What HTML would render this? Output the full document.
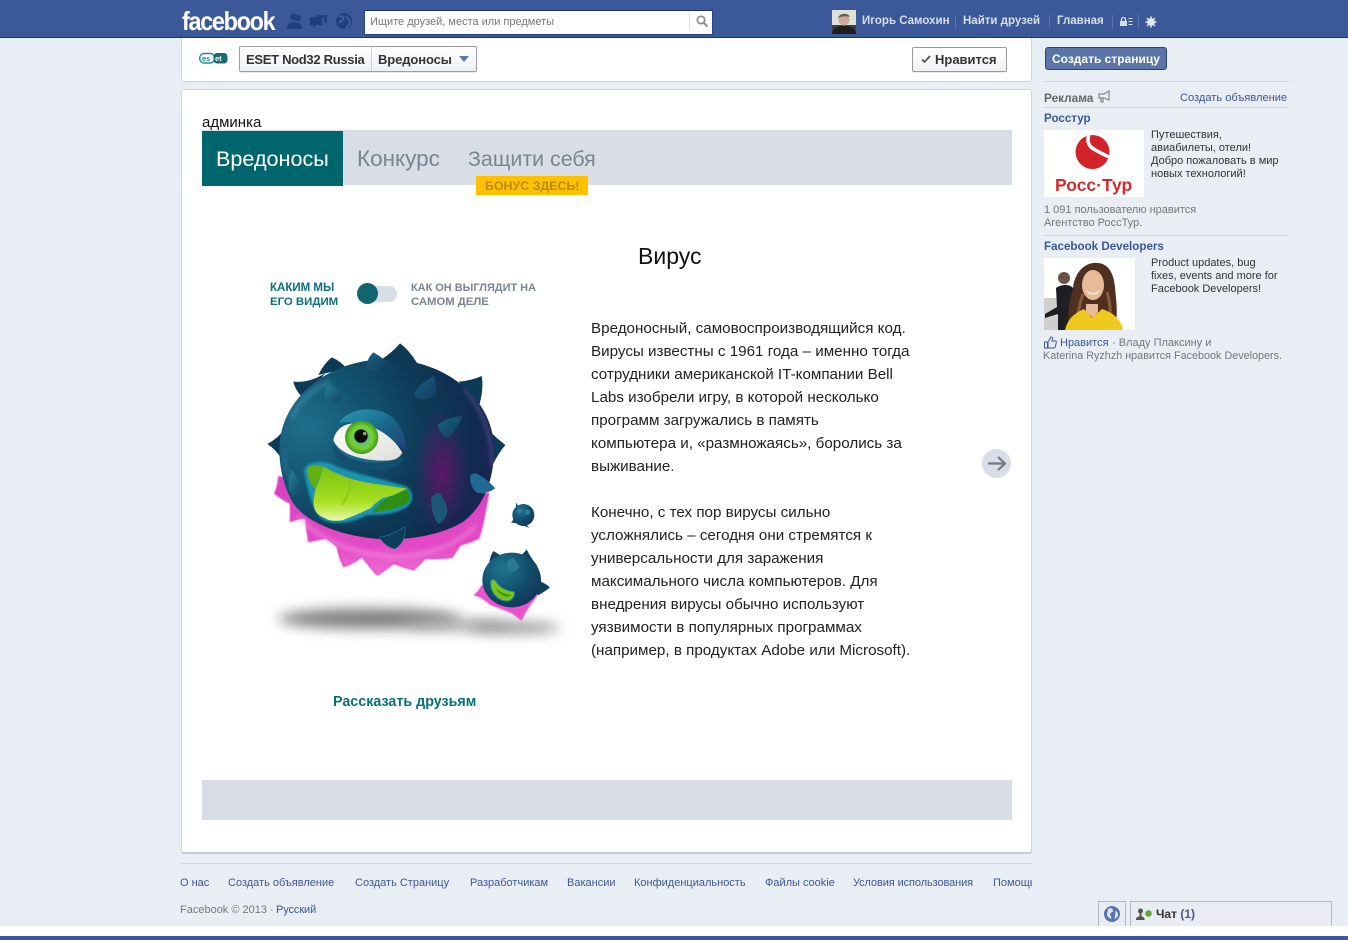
<!DOCTYPE html>
<html lang="ru"><head><meta charset="utf-8"><title>ESET Nod32 Russia</title>
<style>
html,body{margin:0;padding:0}
body{width:1348px;height:940px;position:relative;overflow:hidden;background:#e9edf4;font-family:"Liberation Sans",sans-serif;color:#111}
.b{position:absolute;box-sizing:border-box}
.t{position:absolute;white-space:nowrap;line-height:16px}
.n{color:#d8dfea;font-weight:bold;font-size:11.5px;top:13px}
.s{width:1px;height:13px;background:#5a75ab;top:15px;position:absolute}
.l{font-size:15.2px;left:591px;color:#222;line-height:20px}
.f{font-size:11px;color:#3b5998;top:875px}
.a{font-size:11px;color:#333}
.g{font-size:11px;color:#777}
.h{font-size:11.6px;color:#3b5998;font-weight:bold}
</style></head><body>
<!-- header -->
<div class="b" style="left:0;top:0;width:1348px;height:38px;background:#3b5998;border-bottom:1px solid #133783"></div>
<div class="t" style="left:182px;top:7px;font-size:26px;line-height:28px;font-weight:bold;color:#fff;letter-spacing:-1.45px;transform:scaleX(.9);transform-origin:0 0">facebook</div>
<svg class="b" style="left:284px;top:12px" width="70" height="20" viewBox="0 0 70 20">
<g fill="#223f7d"><circle cx="10" cy="5" r="3.6"/><circle cx="14" cy="6" r="3"/><path d="M3 17c0-5 2-7 7-7s8 2 8 7z"/><path d="M26 5h12v8h-6l-3 3v-3h-3z"/><path d="M33 3h10v8h-3V6h-7z"/><circle cx="60" cy="9" r="8"/></g>
<path d="M55 5c3-2 5 0 4 2s-3 2-3 4M62 4c1 3 4 3 4 6s-3 4-4 6" stroke="#3f5e9b" stroke-width="2" fill="none"/>
</svg>
<div class="b" style="left:364px;top:10px;width:349px;height:25px;background:#fff;border:1px solid #2a4480;border-top-color:#1d3669"></div>
<div class="t" style="left:370px;top:14px;font-size:11px;color:#777">Ищите друзей, места или предметы</div>
<div class="b" style="left:689px;top:13px;width:1px;height:17px;background:#ddd"></div>
<svg class="b" style="left:695px;top:14px" width="14" height="14" viewBox="0 0 14 14"><circle cx="6" cy="6" r="3.7" fill="none" stroke="#8b8b8b" stroke-width="1.7"/><path d="M9 9l3.500 3.500" stroke="#8b8b8b" stroke-width="2"/></svg>
<svg class="b" style="left:832px;top:10px" width="24" height="24" viewBox="0 0 24 24"><rect width="24" height="24" fill="#dfe0da"/><rect y="15" width="24" height="9" fill="#3c3d3c"/><circle cx="12" cy="10" r="5.500" fill="#c9ab98"/><path d="M6 8c1-5 10-6 12-1-3-1-8-1-12 1z" fill="#6d6050"/><path d="M0 24c1-6 5-8 12-8s11 2 12 8z" fill="#1d1d1d"/></svg>
<div class="t n" style="left:862px">Игорь Самохин</div><div class="s" style="left:955px"></div>
<div class="t n" style="left:963px">Найти друзей</div><div class="s" style="left:1049px"></div>
<div class="t n" style="left:1057px">Главная</div><div class="s" style="left:1112px"></div>
<svg class="b" style="left:1119px;top:16px" width="14" height="11" viewBox="0 0 14 11"><path d="M1 5h7v5H1z" fill="#d8dfea"/><path d="M2.500 5V3.500a2 2 0 0 1 4 0V5" fill="none" stroke="#d8dfea" stroke-width="1.300"/><path d="M9.500 2.500h4M9.500 5.500h4M9.500 8.500h4" stroke="#d8dfea" stroke-width="1"/></svg>
<div class="s" style="left:1138px"></div>
<svg class="b" style="left:1145px;top:16px" width="12" height="12" viewBox="0 0 12 12"><circle cx="6" cy="6" r="2.800" fill="none" stroke="#e2e7f1" stroke-width="2"/><path d="M6 .5v11M.5 6h11M2 2l8 8M10 2l-8 8" stroke="#e2e7f1" stroke-width="1.500"/></svg>

<!-- top card -->
<div class="b" style="left:181px;top:38px;width:851px;height:44px;background:#fff;border:1px solid #cdd4e2;border-top:0;border-radius:0 0 3px 3px"></div>
<svg class="b" style="left:199px;top:52px" width="29" height="13" viewBox="0 0 29 13"><rect x=".7" y="1.500" width="15" height="9.500" rx="4.500" fill="none" stroke="#1c8d94" stroke-width="1.400"/><rect x="14.500" y="1" width="14" height="10.500" rx="3.500" fill="#176b75"/><text x="3" y="9" font-family="Liberation Sans" font-size="7.500" font-weight="bold" fill="#1c8d94">es</text><text x="16" y="9" font-family="Liberation Sans" font-size="7.500" font-weight="bold" fill="#fff">et</text></svg>
<div class="b" style="left:239px;top:46px;width:238px;height:26px;border:1px solid #9a9fa8;border-radius:2px;background:linear-gradient(#fff,#eef0f4);box-shadow:0 1px 0 rgba(0,0,0,.08)"></div>
<div class="b" style="left:371px;top:47px;width:1px;height:24px;background:#cfd3da"></div>
<div class="t" style="left:246px;top:52px;font-size:13px;font-weight:bold;color:#333;letter-spacing:-.3px">ESET Nod32 Russia</div>
<div class="t" style="left:378px;top:52px;font-size:13px;font-weight:bold;color:#333;letter-spacing:-.1px">Вредоносы</div>
<svg class="b" style="left:459px;top:56px" width="11" height="7"><path d="M0 0h10L5 6z" fill="#6079ac"/></svg>
<div class="b" style="left:912px;top:47px;width:95px;height:25px;border:1px solid #999;border-radius:2px;background:linear-gradient(#fff,#f0f1f4);box-shadow:0 1px 0 rgba(0,0,0,.08)"></div>
<svg class="b" style="left:921px;top:55px" width="10" height="9"><path d="M1 4.500l2.500 2.500L9 1" stroke="#555" stroke-width="1.800" fill="none"/></svg>
<div class="t" style="left:935px;top:52px;font-size:13px;font-weight:bold;color:#333">Нравится</div>

<!-- right column -->
<div class="b" style="left:1045px;top:47px;width:122px;height:23px;background:#5b74a8;border:1px solid #29447e;border-radius:3px"></div>
<div class="t" style="left:1052px;top:51px;font-size:12px;font-weight:bold;color:#fff">Создать страницу</div>
<div class="b" style="left:1044px;top:81px;width:245px;height:1px;background:#cfd4df"></div>
<div class="t" style="left:1044px;top:90px;font-size:11.800px;font-weight:bold;color:#666">Реклама</div>
<svg class="b" style="left:1098px;top:90px" width="14" height="13" viewBox="0 0 14 13"><path d="M1 4h5l5-3v9L6 8H1zM3 8v4h2V8" fill="none" stroke="#888" stroke-width="1.200"/></svg>
<div class="t" style="left:1180px;top:90px;font-size:11.100px;color:#3b5998">Создать объявление</div>
<div class="b" style="left:1044px;top:107px;width:245px;height:1px;background:#cfd4df"></div>
<div class="t h" style="left:1044px;top:111px">Росстур</div>
<div class="b" style="left:1044px;top:130px;width:100px;height:67px;background:#fff"></div>
<svg class="b" style="left:1074px;top:134px" width="40" height="38" viewBox="0 0 40 38"><circle cx="18.500" cy="18" r="17" fill="#d2232a"/><path d="M15 0c-2 6-1 10 2 13 3 3 10 6 20 11" fill="none" stroke="#fff" stroke-width="3.500"/></svg>
<div class="t" style="left:1055px;top:176px;font-size:17.500px;line-height:18px;font-weight:bold;color:#d8282e">Росс·Тур</div>
<div class="t a" style="left:1151px;top:127px">Путешествия,</div>
<div class="t a" style="left:1151px;top:140px">авиабилеты, отели!</div>
<div class="t a" style="left:1151px;top:153px">Добро пожаловать в мир</div>
<div class="t a" style="left:1151px;top:166px">новых технологий!</div>
<div class="t g" style="left:1044px;top:202px">1 091 пользователю нравится</div>
<div class="t g" style="left:1044px;top:215px">Агентство РоссТур.</div>
<div class="b" style="left:1044px;top:235px;width:245px;height:1px;background:#cfd4df"></div>
<div class="t h" style="left:1044px;top:239px">Facebook Developers</div>
<svg class="b" style="left:1044px;top:258px" width="91" height="72" viewBox="0 0 91 72"><rect width="91" height="72" fill="#fff"/><rect y="40" width="14" height="32" fill="#cfcfcf"/><circle cx="20" cy="20" r="6" fill="#6b5244"/><path d="M12 30c5-4 14-4 17 0l3 30-8 12H14v-16L1 60v-4l12-7z" fill="#1f1f23"/><path d="M26 72c-4-16 0-30 3-42 2-18 14-26 24-25 12 0 17 12 18 24 1 14 4 28 -1 43z" fill="#4f3020"/><path d="M33 70c0-14 3-26 6-34M66 68c1-12 0-24-3-34" stroke="#8a5a35" stroke-width="3" fill="none"/><ellipse cx="49" cy="27" rx="11" ry="15" fill="#e8bb98"/><path d="M42 32c4 4 10 4 14 0-2 6-12 6-14 0z" fill="#fff"/><path d="M21 72c3-12 10-17 19-21l8 9 10-9c9 3 19 9 21 21z" fill="#f0c91f"/><path d="M42 46h12v8l-5 6-7-6z" fill="#e8bb98"/></svg>
<div class="t a" style="left:1151px;top:255px">Product updates, bug</div>
<div class="t a" style="left:1151px;top:268px">fixes, events and more for</div>
<div class="t a" style="left:1151px;top:281px">Facebook Developers!</div>
<svg class="b" style="left:1044px;top:336px" width="13" height="13" viewBox="0 0 13 13"><path d="M.5 6h3v6h-3zM4 6l3-5c1.500 0 2 1 1.500 2.500L8 5h3.500c1 0 1 1 .7 2l-1 4c-.2.700-.7 1-1.500 1H4z" fill="#e6ebf5" stroke="#3b5998"/></svg>
<div class="t" style="left:1060px;top:335px;font-size:11px;color:#3b5998">Нравится</div>
<div class="t g" style="left:1112px;top:335px">· Владу Плаксину и</div>
<div class="t g" style="left:1043px;top:348px;font-size:10.800px">Katerina Ryzhzh нравится Facebook Developers.</div>

<!-- main card -->
<div class="b" style="left:181px;top:89px;width:851px;height:765px;background:#fff;border:1px solid #cdd4e2;border-bottom:2px solid #c3cad8;border-radius:3px"></div>
<div class="t" style="left:202px;top:115px;font-size:15px;color:#111">админка</div>
<div class="b" style="left:202px;top:130px;width:810px;height:55px;background:#d8dde6"></div>
<div class="b" style="left:202px;top:131px;width:141px;height:55px;background:#00666e"></div>
<div class="t" style="left:216px;top:146px;font-size:21.600px;line-height:26px;color:#fff">Вредоносы</div>
<div class="t" style="left:357px;top:146px;font-size:22.500px;line-height:26px;color:#7a8592">Конкурс</div>
<div class="t" style="left:468px;top:146px;font-size:21.400px;line-height:26px;color:#7a8592">Защити себя</div>
<div class="b" style="left:476px;top:176px;width:112px;height:19px;background:#ffc000"></div>
<div class="t" style="left:485px;top:178px;font-size:12.400px;font-weight:bold;color:#bb8a12">БОНУС ЗДЕСЬ!</div>
<div class="t" style="left:638px;top:242px;font-size:23px;line-height:28px;color:#111">Вирус</div>
<div class="t" style="left:270px;top:280px;font-size:11.500px;font-weight:bold;color:#0b6f80">КАКИМ МЫ</div>
<div class="t" style="left:270px;top:294px;font-size:11.400px;font-weight:bold;color:#0b6f80">ЕГО ВИДИМ</div>
<div class="b" style="left:360px;top:286px;width:37px;height:16px;background:#d8dde6;border-radius:8px"></div>
<div class="b" style="left:357px;top:283px;width:21px;height:21px;background:#11666f;border-radius:50%"></div>
<div class="t" style="left:411px;top:280px;font-size:10.950px;font-weight:bold;color:#7a8592">КАК ОН ВЫГЛЯДИТ НА</div>
<div class="t" style="left:411px;top:294px;font-size:11.300px;font-weight:bold;color:#7a8592">САМОМ ДЕЛЕ</div>

<!-- virus -->
<svg class="b" style="left:250px;top:330px" width="330" height="320" viewBox="0 0 990 960">
<defs>
<filter id="bl" filterUnits="userSpaceOnUse" x="0" y="740" width="990" height="220"><feGaussianBlur stdDeviation="20"/></filter>
<filter id="s1" x="-30%" y="-30%" width="160%" height="160%"><feGaussianBlur stdDeviation="6"/></filter>
<filter id="s2" x="-30%" y="-30%" width="160%" height="160%"><feGaussianBlur stdDeviation="3"/></filter>
<filter id="s0" x="-10%" y="-10%" width="120%" height="120%"><feGaussianBlur stdDeviation="1.500"/></filter>
<clipPath id="bc"><path d="M88 358C88 210 230 88 410 88C590 88 732 210 732 358C732 450 700 530 640 575C570 618 470 630 400 628C300 622 180 590 130 520C100 470 88 410 88 358Z"/></clipPath>
<radialGradient id="body" gradientUnits="userSpaceOnUse" cx="170" cy="290" r="620"><stop offset="0" stop-color="#1f6f8c"/><stop offset=".28" stop-color="#125470"/><stop offset=".55" stop-color="#0e3b58"/><stop offset=".8" stop-color="#0f2c50"/><stop offset="1" stop-color="#241f55"/></radialGradient>
<radialGradient id="sm" cx=".35" cy=".3" r=".8"><stop offset="0" stop-color="#1f7590"/><stop offset=".6" stop-color="#114b68"/><stop offset="1" stop-color="#15305a"/></radialGradient>
<radialGradient id="pur" cx=".5" cy=".5" r=".5"><stop offset="0" stop-color="#5e1668" stop-opacity=".95"/><stop offset="1" stop-color="#5e1668" stop-opacity="0"/></radialGradient>
<linearGradient id="pink" x1="0" y1="0" x2="0" y2="1"><stop offset="0" stop-color="#d63fc0"/><stop offset=".7" stop-color="#e34ac6"/><stop offset="1" stop-color="#ee6cd4"/></linearGradient>
<linearGradient id="tng" x1="0" y1="0" x2="0" y2="1"><stop offset="0" stop-color="#79c010"/><stop offset=".65" stop-color="#a8e022"/><stop offset="1" stop-color="#e8f8a8"/></linearGradient>
<linearGradient id="bmp" x1="0" y1="0" x2="1" y2="1"><stop offset="0" stop-color="#26809c"/><stop offset="1" stop-color="#0f4260"/></linearGradient>
<linearGradient id="bmd" x1="0" y1="0" x2="1" y2="1"><stop offset="0" stop-color="#1a6384"/><stop offset="1" stop-color="#123a5c"/></linearGradient>
<radialGradient id="ir" cx=".5" cy=".5" r=".5"><stop offset=".25" stop-color="#4fb0a0"/><stop offset=".65" stop-color="#78d22c"/><stop offset="1" stop-color="#3e9a22"/></radialGradient>
<linearGradient id="wh" x1="0" y1="0" x2="1" y2="1"><stop offset="0" stop-color="#fff"/><stop offset="1" stop-color="#dedfd8"/></linearGradient>
<linearGradient id="lid" x1="0" y1="0" x2="1" y2="1"><stop offset="0" stop-color="#2a9ab4"/><stop offset=".6" stop-color="#166284"/><stop offset="1" stop-color="#2b3f80"/></linearGradient>
</defs>
<ellipse cx="360" cy="866" rx="275" ry="30" fill="#7c7c7c" filter="url(#bl)"/>
<ellipse cx="620" cy="885" rx="160" ry="16" fill="#a5a5a5" filter="url(#bl)"/>
<ellipse cx="790" cy="893" rx="140" ry="15" fill="#858585" filter="url(#bl)"/>
<!-- pink underside -->
<path d="M86 440Q84 470 74 490Q95 508 121 520Q122 550 121 575Q145 565 166 565Q170 600 176 635Q200 630 226 625Q245 635 261 650Q268 685 281 710Q310 700 336 680Q358 710 381 735Q408 720 431 700Q462 712 491 720Q510 702 526 685Q565 688 606 682Q620 662 631 645Q660 638 686 625Q695 600 701 570Q708 535 716 490L400 500Z" fill="url(#pink)" stroke="#e34ac6" stroke-width="4" stroke-linejoin="round" filter="url(#s0)"/>
<path d="M140 555C210 630 310 672 430 680C530 680 620 645 680 585" fill="none" stroke="#f7a0e4" stroke-width="10" opacity=".55" filter="url(#s1)"/>
<!-- outer spikes -->
<g fill="#0d3a56">
<path d="M110 290Q85 325 52 342Q78 358 98 392Z"/>
<path d="M225 130Q175 160 130 155Q135 182 165 210Z"/>
<path d="M205 135Q222 100 245 82Q270 92 290 115Z"/>
<path d="M375 100Q420 75 450 40Q478 60 505 105Z"/>
<path d="M625 155Q665 152 695 138Q702 175 688 225Z"/>
<path d="M715 300Q740 325 766 345Q745 370 728 405Z"/>
</g>
<path d="M88 358C88 210 230 88 410 88C590 88 732 210 732 358C732 450 700 530 640 575C570 618 470 630 400 628C300 622 180 590 130 520C100 470 88 410 88 358Z" fill="url(#body)"/>
<g clip-path="url(#bc)">
<ellipse cx="575" cy="430" rx="85" ry="190" fill="url(#pur)"/>
<path d="M125 265c25-55 65-90 115-110" stroke="#4c9ab3" stroke-width="16" fill="none" opacity=".45" filter="url(#s1)"/>
<path d="M102 360c0 35 5 65 22 95" stroke="#3f8ea8" stroke-width="10" fill="none" opacity=".35" filter="url(#s1)"/>
<path d="M726 410c4-80-25-170-85-235" stroke="#6a5fa6" stroke-width="9" fill="none" opacity=".6" filter="url(#s1)"/>
<path d="M230 590c60 25 130 35 170 35 90 0 180-20 250-60" stroke="#0a2c48" stroke-width="16" fill="none" opacity=".5" filter="url(#s1)"/>
</g>
<path d="M386 622Q420 618 465 590Q470 635 435 657Q412 655 386 622Z" fill="#0d3d59" stroke="#1d9ab0" stroke-width="1.500"/>
<!-- bumps -->
<path d="M223 190Q225 170 240 162Q262 175 278 198Q262 220 240 218Q225 212 223 190Z" fill="url(#bmp)"/>
<path d="M350 112Q350 85 370 67Q395 80 412 100Q395 122 370 125Q355 122 350 112Z" fill="url(#bmd)"/>
<path d="M492 190Q515 155 552 138Q562 165 555 195Q540 210 515 208Q498 205 492 190Z" fill="url(#bmd)"/>
<path d="M563 285Q590 262 637 258Q625 295 595 325Q570 315 563 285Z" fill="url(#bmd)"/>
<path d="M115 465Q118 435 125 420Q148 445 158 470Q148 490 130 498Q118 488 115 465Z" fill="url(#bmp)"/>
<path d="M660 440Q665 428 680 430Q715 450 736 475Q705 495 680 488Q660 470 660 440Z" fill="#1f6a92"/>
<path d="M543 505Q555 485 570 490Q592 520 592 545Q585 575 565 582Q545 560 543 505Z" fill="#1c5778"/>
<!-- eye -->
<path d="M250 345C240 385 300 420 370 420C420 420 455 405 462 385L300 330Z" fill="#134f6e"/>
<path d="M268 278C290 240 360 225 410 250C450 272 470 320 465 360L445 345C400 300 330 270 268 278Z" fill="url(#lid)"/>
<path d="M250 330c8-35 35-52 75-50 50 5 105 40 132 88-8 18-25 24-50 24-65 5-145-20-157-62z" fill="url(#wh)"/>
<circle cx="335" cy="322" r="50" fill="url(#ir)"/><circle cx="333" cy="318" r="20" fill="#0a0a0a"/><circle cx="344" cy="311" r="5" fill="#dff5c0" opacity=".7"/>
<path d="M250 330c10 30 60 62 157 62 20 0 40-6 50-24-10 40-190 50-207-38z" fill="#1c6c8a" opacity=".9"/>
<!-- mouth -->
<path d="M162 425C165 395 205 390 240 400C300 430 380 440 470 470C495 490 490 515 470 532C430 555 390 555 350 555C310 578 260 585 225 572C190 555 175 490 162 425Z" fill="#1b93b0" filter="url(#s2)"/>
<path d="M171 420Q178 398 221 410Q205 445 196 478Q172 450 171 420Z" fill="#64b012"/>
<path d="M471 478Q485 495 478 512Q462 535 366 548Q385 520 406 508Z" fill="#2f8f10"/>
<path d="M221 410Q290 450 366 460Q420 468 471 476Q425 500 396 505Q375 520 361 535Q320 555 276 571Q240 575 226 565Q195 555 191 525Q190 505 196 480Z" fill="url(#tng)"/>
<path d="M300 450c6 30-15 60-25 75" stroke="#7ec018" stroke-width="6" fill="none" opacity=".6" filter="url(#s0)"/>
<!-- small viruses -->
<g><path d="M798 518l12 18 10 20-8 8 26 30-15-6-20-8-20-2 14-18z" fill="#17506c"/><circle cx="820" cy="555" r="33" fill="url(#sm)"/><circle cx="832" cy="547" r="8" fill="#2d7e9c"/><circle cx="808" cy="543" r="6" fill="#32809e"/></g>
<g><path d="M695 765Q685 785 670 795Q700 805 720 825Q760 840 785 850Q800 860 815 873Q825 850 835 835L875 780Z" fill="#ea52cb" filter="url(#s0)"/>
<path d="M718 695Q722 675 730 663Q745 672 762 682L805 682Q820 672 830 658Q840 680 860 705Q870 730 872 755Q885 760 900 772Q885 785 865 795Z" fill="#103f5a"/>
<ellipse cx="785" cy="750" rx="88" ry="82" fill="url(#sm)"/><path d="M770 705Q772 690 788 682Q802 695 808 712Q795 728 780 725Q772 718 770 705Z" fill="#2a7a96"/><path d="M722 755c5-12 15-5 18 3 10 15 30 25 52 27 5 10-5 28-22 28-30 0-50-30-48-58z" fill="#7cc514" stroke="#1c8ea4" stroke-width="3"/><path d="M735 770c10 15 30 25 50 25-15 12-40 0-50-25z" fill="#3d9410"/></g>
</svg>

<div class="l t" style="top:319px">Вредоносный, самовоспроизводящийся код.</div>
<div class="l t" style="top:342px">Вирусы известны с 1961 года – именно тогда</div>
<div class="l t" style="top:365px">сотрудники американской IT-компании Bell</div>
<div class="l t" style="top:388px">Labs изобрели игру, в которой несколько</div>
<div class="l t" style="top:411px">программ загружались в память</div>
<div class="l t" style="top:434px">компьютера и, «размножаясь», боролись за</div>
<div class="l t" style="top:457px">выживание.</div>
<div class="l t" style="top:503px">Конечно, с тех пор вирусы сильно</div>
<div class="l t" style="top:526px">усложнялись – сегодня они стремятся к</div>
<div class="l t" style="top:549px">универсальности для заражения</div>
<div class="l t" style="top:572px">максимального числа компьютеров. Для</div>
<div class="l t" style="top:595px">внедрения вирусы обычно используют</div>
<div class="l t" style="top:618px">уязвимости в популярных программах</div>
<div class="l t" style="top:641px">(например, в продуктах Adobe или Microsoft).</div>

<div class="b" style="left:982px;top:449px;width:29px;height:29px;background:#d8dde6;border-radius:50%"></div>
<svg class="b" style="left:982px;top:449px" width="29" height="29" viewBox="0 0 29 29"><path d="M6 14.500h17M16 8l7 6.500-7 6.500" fill="none" stroke="#6f7a85" stroke-width="2.200"/></svg>
<div class="t" style="left:333px;top:694px;font-size:14.300px;font-weight:bold;color:#08707a">Рассказать друзьям</div>
<div class="b" style="left:202px;top:780px;width:810px;height:40px;background:#d8dde6"></div>

<!-- footer -->
<div class="b" style="left:181px;top:863px;width:851px;height:1px;background:#cfd4df"></div>
<div class="t f" style="left:180px">О нас</div>
<div class="t f" style="left:228px">Создать объявление</div>
<div class="t f" style="left:355px">Создать Страницу</div>
<div class="t f" style="left:470px">Разработчикам</div>
<div class="t f" style="left:567px">Вакансии</div>
<div class="t f" style="left:634px">Конфиденциальность</div>
<div class="t f" style="left:765px">Файлы cookie</div>
<div class="t f" style="left:853px;letter-spacing:-.1px">Условия использования</div>
<div class="b" style="left:993px;top:875px;width:39px;height:16px;overflow:hidden"><div class="t f" style="left:0;top:0">Помощь</div></div>
<div class="t" style="left:180px;top:902px;font-size:11px;color:#777">Facebook © 2013 ·</div>
<div class="t" style="left:276px;top:902px;font-size:11px;color:#3b5998;letter-spacing:-.1px">Русский</div>

<!-- chat -->
<div class="b" style="left:1098px;top:901px;width:28px;height:26px;background:#e9edf3;border:1px solid #b4b9c4;border-bottom:0"></div>
<svg class="b" style="left:1103px;top:905px" width="18" height="18" viewBox="0 0 18 18"><circle cx="9" cy="9" r="8" fill="#5574ad"/><path d="M5 4c3-2 5 0 5 2s-3 1-3 3 2 2 1 5c-2-1-4-3-4-5zM12 6c2 0 3 2 3 4s-2 3-3 4c-1-2 1-4 0-8z" fill="#dfe6f3"/></svg>
<div class="b" style="left:1130px;top:901px;width:202px;height:26px;background:#e9edf3;border:1px solid #b4b9c4;border-bottom:0"></div>
<svg class="b" style="left:1136px;top:908px" width="18" height="12" viewBox="0 0 18 12"><circle cx="4.500" cy="3" r="2.500" fill="#555"/><path d="M3.500 5h2v3l3 2v2H0v-2l3.500-2z" fill="#555"/><circle cx="12.500" cy="5.500" r="3.300" fill="#5fa82f"/></svg>
<div class="t" style="left:1156px;top:906px;font-size:12px;font-weight:bold;color:#333">Чат <span style="color:#4b5a78">(1)</span></div>
<div class="b" style="left:0;top:926px;width:1348px;height:10px;background:#fff"></div>
<div class="b" style="left:0;top:936px;width:1348px;height:4px;background:#3b5998"></div>
</body></html>
